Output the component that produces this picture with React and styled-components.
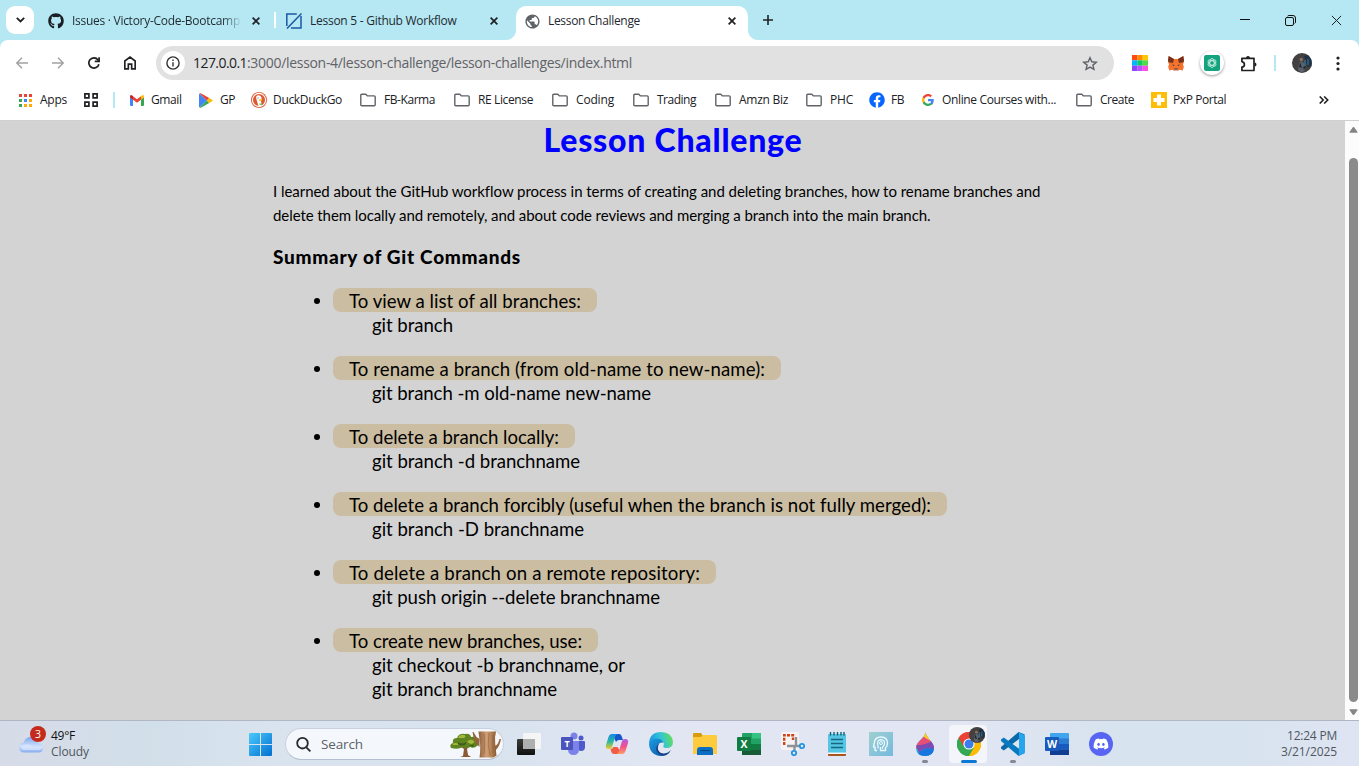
import React, { useLayoutEffect, useRef, useState } from 'react';
import styled, { createGlobalStyle } from 'styled-components';
import { FaGithub, FaDiscord, FaFacebook } from 'react-icons/fa';
import { MdPublic } from 'react-icons/md';

const GlobalStyle = createGlobalStyle`
  * { box-sizing: border-box; }
  body { margin: 0; overflow: hidden; }
  svg { display: block; flex: none; }
`;

const UI_FONT = '"Open Sans", "Noto Sans", sans-serif';
const PAGE_FONT = 'Lato, "Liberation Sans", sans-serif';

/* ---------- text that is tracked to a given width ---------- */
const FitSpan = styled.span`
  display: inline-block;
  white-space: pre;
  flex: none;
`;

function Fit({ w, children }) {
  const ref = useRef(null);
  const [spacing, setSpacing] = useState(0);
  useLayoutEffect(() => {
    const natural = ref.current.getBoundingClientRect().width;
    setSpacing((w - natural) / children.length);
  }, [w, children]);
  return (
    <FitSpan ref={ref} style={{ letterSpacing: `${spacing}px` }}>
      {children}
    </FitSpan>
  );
}

/* ---------- window ---------- */
const Desktop = styled.div`
  width: 1359px;
  height: 766px;
  display: flex;
  flex-direction: column;
  overflow: hidden;
  background: #b5e8f3;
`;

const TabStrip = styled.div`
  height: 40px;
  flex: none;
  display: flex;
  align-items: flex-end;
  padding-left: 6px;
  font: 12px/16px ${UI_FONT};
  color: #1f2a30;
`;

const TabSearch = styled.div`
  width: 28px;
  height: 28px;
  margin: 0 6px 6px 0;
  border-radius: 9px;
  background: #fff;
  display: grid;
  place-items: center;
`;

const Tab = styled.div`
  position: relative;
  width: 232px;
  height: 34px;
  padding: 0 8px 5px 8px;
  display: flex;
  align-items: center;
  gap: 8px;
  margin-left: ${(p) => (p.$active ? 6 : 0)}px;
  border-radius: 10px 10px 0 0;
  background: ${(p) => (p.$active ? '#fff' : 'transparent')};
`;

const TabFoot = styled.i`
  position: absolute;
  bottom: 0;
  ${(p) => p.$side}: -10px;
  width: 10px;
  height: 10px;
  background: radial-gradient(
    circle at ${(p) => (p.$side === 'left' ? '0 0' : '100% 0')},
    transparent 9.5px,
    #fff 10.5px
  );
`;

const TabTitle = styled.div`
  flex: 1;
  min-width: 0;
  mask-image: ${(p) => (p.$fade ? 'linear-gradient(90deg, #000 150px, transparent 170px)' : 'none')};
`;

const TabDivider = styled.div`
  width: 2px;
  height: 16px;
  margin: 0 2px 12px;
  background: #fff;
`;

const NewTab = styled.div`
  width: 40px;
  height: 40px;
  display: grid;
  place-items: center;
`;

const WindowControls = styled.div`
  margin-left: auto;
  height: 40px;
  display: flex;
`;

const WindowButton = styled.div`
  width: 46px;
  padding-left: 1px;
  display: grid;
  place-items: center;
`;

const Toolbar = styled.div`
  height: 40px;
  flex: none;
  padding: 4px 3px 0 4px;
  display: flex;
  align-items: center;
  background: #fff;
  border-radius: 8px 8px 0 0;
`;

const ToolSlot = styled.div`
  width: ${(p) => p.$w || 36}px;
  height: 36px;
  padding-top: 2px;
  display: grid;
  place-items: center;
`;

const Omnibox = styled.div`
  flex: none;
  width: 958px;
  height: 34px;
  margin: 2px 8px 0;
  padding: 0 16px 0 5px;
  border-radius: 17px;
  background: #e1e1e1;
  display: flex;
  align-items: center;
  font: 14px/20px ${UI_FONT};
  color: #5f6368;
`;

const SiteInfo = styled.div`
  width: 24px;
  height: 24px;
  margin-right: 8px;
  border-radius: 50%;
  background: #fff;
  display: grid;
  place-items: center;
`;

const Host = styled.span`
  color: #202124;
`;

const OmniboxEnd = styled.div`
  margin-left: auto;
`;

const Divider = styled.div`
  width: 2px;
  height: 16px;
  background: #b5e8f3;
`;

const RoundButton = styled.div`
  width: 24px;
  height: 24px;
  border-radius: 50%;
  background: #fff;
  box-shadow: 0 1px 3px rgba(0, 0, 0, 0.4);
  display: grid;
  place-items: center;
`;

const Bookmarks = styled.div`
  height: 41px;
  flex: none;
  padding: 0 30px 0 17px;
  display: flex;
  align-items: center;
  background: #fff;
  border-bottom: 1px solid #cfcfcf;
  font: 12px/16px ${UI_FONT};
  color: #202124;
`;

const BookmarkItem = styled.div`
  display: flex;
  align-items: center;
  flex: none;
  gap: ${(p) => p.$gap}px;
  margin-left: ${(p) => p.$lead}px;
`;

const IconBox = styled.div`
  width: 16px;
  height: 16px;
  flex: none;
  display: grid;
  place-items: center;
`;

const More = styled.div`
  margin-left: auto;
`;

/* ---------- page ---------- */
const Viewport = styled.div`
  height: 599px;
  flex: none;
  display: flex;
  background: #d3d3d3;
`;

const Page = styled.main`
  flex: 1;
  padding-left: 273px;
  font-family: ${PAGE_FONT};
  color: #000;
`;

const Title = styled.h1`
  width: 800px;
  margin: 0;
  text-align: center;
  font-size: 32px;
  line-height: 37px;
  font-weight: 900;
  color: #00f;
`;

const Intro = styled.p`
  margin: 21px 0 0;
  font-size: 15px;
  line-height: 24px;
`;

const Line = styled.span`
  display: block;
`;

const Subtitle = styled.h2`
  margin: 18px 0 0;
  font-size: 19px;
  line-height: 24px;
  font-weight: 900;
`;

const CommandList = styled.ul`
  list-style: none;
  margin: 19px 0 0;
  padding: 0 0 0 41px;
  display: flex;
  flex-direction: column;
  gap: 20px;
  font-size: 18.6px;
  line-height: 24px;
`;

const CommandItem = styled.li`
  display: flex;
  gap: 13px;

  &::before {
    content: '';
    width: 6px;
    height: 6px;
    margin-top: 10px;
    border-radius: 50%;
    background: #000;
  }
`;

const Label = styled.div`
  width: max-content;
  height: 24px;
  padding: 1px 16px 0;
  border-radius: 8px;
  background: #cabda2;
`;

const Command = styled.div`
  height: 24px;
  padding: 1px 0 0 39px;
`;

const Scrollbar = styled.div`
  width: 14px;
  padding: 5px 1px 3px 3px;
  display: flex;
  flex-direction: column;
  align-items: center;
  background: #fcfcfc;
`;

const Thumb = styled.div`
  width: 9px;
  height: 544px;
  flex: none;
  margin: 25px 0 7px;
  border-radius: 5px;
  background: #8b8b8b;
`;

/* ---------- taskbar ---------- */
const Taskbar = styled.footer`
  height: 46px;
  flex: none;
  display: flex;
  align-items: center;
  border-top: 1px solid #b0b6c4;
  background: linear-gradient(90deg, #d7dbe8 0, #d1dfe9 150px, #dae4ef 290px, #d7e3ee 480px, #e2e6f3 670px, #e2e6f3 960px, #d7e3ee 1110px, #d7e3ee 1240px, #dfe4f3 1359px);
  font: 12px/16px ${UI_FONT};
  color: #50565e;
`;

const Weather = styled.div`
  position: relative;
  width: 238px;
  flex: none;
  padding-left: 18px;
  display: flex;
  align-items: center;
  gap: 7px;
`;

const Badge = styled.span`
  position: absolute;
  left: 30px;
  top: -2px;
  width: 16px;
  height: 16px;
  border-radius: 50%;
  background: #c42b1c;
  color: #fff;
  font-size: 10.5px;
  text-align: center;
`;

const Strong = styled.div`
  color: #111;
`;

const TaskSlot = styled.div`
  position: relative;
  width: 44px;
  height: 45px;
  flex: none;
  display: grid;
  place-items: center;
  padding: 1px 0 0 1px;
`;

const ActiveTile = styled.i`
  position: absolute;
  left: 3px;
  top: 4px;
  width: 38px;
  height: 38px;
  border-radius: 4px;
  background: #f3f5fb;
`;

const RunMark = styled.i`
  position: absolute;
  left: calc(50% - ${(p) => (p.$wide ? 7 : 2)}px);
  top: 39px;
  width: ${(p) => (p.$wide ? 16 : 6)}px;
  height: 3px;
  border-radius: 2px;
  background: ${(p) => (p.$wide ? '#0a78d4' : '#858890')};
`;

const SearchBox = styled.div`
  width: 219px;
  height: 32px;
  flex: none;
  margin: 1px 2px 0 3px;
  padding: 0 2px 0 10px;
  border: 1px solid #c9d0de;
  border-bottom-color: #b4bfcf;
  border-radius: 16px;
  background: #f4f8fc;
  display: flex;
  align-items: center;
  gap: 10px;
  font-size: 13.5px;
  color: #5c6167;
`;

const SearchArt = styled.div`
  margin-left: auto;
`;

const Clock = styled.div`
  margin-left: auto;
  padding: 0 22px 0 0;
  text-align: right;
`;

/* ---------- icons ---------- */
const Cross = ({ size = 8, width = 1.7 }) => (
  <svg width={size} height={size} viewBox="0 0 10 10" stroke="#202124" strokeWidth={width * (10 / size)} fill="none">
    <path d="M.8.8l8.4 8.4M9.2.8L.8 9.2" />
  </svg>
);

const Folder = () => (
  <svg width="16" height="14" viewBox="0 0 16 14" fill="none" stroke="#5f6368" strokeWidth="1.4" strokeLinejoin="round">
    <path d="M.8 11.8V2.2q0-1 1-1h4l1.7 1.7h6.7q1 0 1 1v7.9q0 1-1 1H1.8q-1 0-1-1z" />
  </svg>
);

const AppsIcon = () => {
  const c = ['#ea4335', '#ea4335', '#ea4335', '#34a853', '#4285f4', '#fbab05', '#34a853', '#fbab05', '#fbab05'];
  return (
    <svg width="13" height="13" viewBox="0 0 13 13">
      {c.map((f, i) => (
        <rect key={i} x={(i % 3) * 5} y={Math.floor(i / 3) * 5} width="3" height="3" fill={f} />
      ))}
    </svg>
  );
};

const GridIcon = () => (
  <svg width="14" height="14" viewBox="0 0 14 14" fill="none" stroke="#202124" strokeWidth="1.7">
    <path d="M.9.9h4v4h-4zM9.1.9h4v4h-4zM.9 9.1h4v4h-4zM9.1 9.1h4v4h-4z" />
  </svg>
);

const Gmail = () => (
  <svg width="14" height="11" viewBox="0 0 14 11">
    <path fill="#4285f4" d="M0 2v8q0 1 1 1h2V4.5z" />
    <path fill="#34a853" d="M11 4.500V11h2q1 0 1-1V2z" />
    <path fill="#ea4335" d="M3 4.800V1.200l4 3 4-3v3.600L7 7.800z" />
    <path fill="#c5221f" d="M0 2.600V1.500Q.3-.6 2.200.5L3 1.200v3.600z" />
    <path fill="#fbbc04" d="M14 2.600V1.500Q13.700-.6 11.800.5l-.8.7v3.600z" />
  </svg>
);

const Play = () => (
  <svg width="14" height="15" viewBox="0 0 14 15">
    <path fill="#4285f4" d="M.6.400L8 7.500.6 14.600Q0 14 0 13.300V1.700Q0 .9.600.4z" />
    <path fill="#ea4335" d="M.6.400Q1.300 0 2.200.4l8 4.700L8 7.500z" />
    <path fill="#34a853" d="M.6 14.600q.7.400 1.600 0l8-4.700L8 7.500z" />
    <path fill="#fbbc04" d="M10.200 5.100l3 1.600q1.200.8 0 1.600l-3 1.600L8 7.500z" />
  </svg>
);

const Duck = () => (
  <svg width="16" height="16" viewBox="0 0 16 16">
    <circle cx="8" cy="8" r="8" fill="#de5833" />
    <circle cx="8" cy="8" r="6.600" fill="none" stroke="#fff" strokeWidth="1.100" />
    <path fill="#fff" d="M5.600 4q2-1.600 4 .1 1.300 1.300.9 3.500L10 9.500l1 3.800q-2 1.200-3.500.9L5.500 7.500Q4.500 5 5.600 4z" />
    <path fill="#fbc02d" d="M8 7.400q2-.6 3.500-.1l-1.700 1 1 .6-2.600.1z" />
    <path fill="#65bc46" d="M8.500 11l1.200.8 1.500-.7v2l-2.700-.4z" />
    <circle cx="7" cy="6" r=".6" fill="#2d4f8e" />
  </svg>
);

const Google = () => (
  <svg width="12" height="12" viewBox="0 0 24 24">
    <path fill="#4285f4" d="M23.500 12.300c0-.9-.1-1.500-.2-2.200H12v4.500h6.500c-.1 1.100-.9 2.700-2.400 3.800l3.800 3c2.300-2.100 3.600-5.300 3.600-9.100z" />
    <path fill="#34a853" d="M12 24c3.200 0 6-1.100 8-2.900l-3.900-3c-1 .7-2.400 1.200-4.100 1.200-3.200 0-5.800-2-6.800-4.900l-4 3.100C3.200 21.300 7.300 24 12 24z" />
    <path fill="#fbbc05" d="M5.200 14.400c-.5-1.600-.5-3.200 0-4.800l-4-3.100c-1.600 3.300-1.600 7.700 0 11z" />
    <path fill="#ea4335" d="M12 4.700c2.300 0 3.800 1 4.700 1.800l3.400-3.300C18 1.200 15.200 0 12 0 7.300 0 3.200 2.700 1.200 6.600l4 3.100c1-3 3.600-5 6.800-5z" />
  </svg>
);

const Plus = () => (
  <svg width="16" height="16" viewBox="0 0 16 16">
    <path fill="#fdbe08" d="M0 0h16v16H0z" />
    <path fill="#fff" d="M6 2.500h4V6h3.500v4H10v3.500H6V10H2.500V6H6z" />
  </svg>
);

const LessonIcon = () => (
  <svg width="16" height="16" viewBox="0 0 16 16" fill="none" stroke="#1b57a6" strokeWidth="1.500">
    <path d="M.8 13V1h10M5 15h10V3M15.500.5L1 15.500" />
  </svg>
);

const Arrow = ({ flip }) => (
  <svg width="12" height="12" viewBox="0 0 12 12" fill="none" stroke="#a0a2a5" strokeWidth="1.500">
    <path d={flip ? 'M0 6h11M6 .7L11.300 6 6 11.300' : 'M12 6H1M6 .7L.7 6 6 11.300'} />
  </svg>
);

const Reload = () => (
  <svg width="12" height="12" viewBox="0 0 12 12" fill="none" stroke="#202124" strokeWidth="1.700">
    <path d="M10.900 7.200A5.100 5.100 0 1 1 9.900 2.700l.8 1" />
    <path d="M11.100.2v4.200H6.800" />
  </svg>
);

const Home = () => (
  <svg width="12" height="14" viewBox="0 0 13 15" fill="none" stroke="#202124" strokeWidth="1.800">
    <path d="M.9 13.900V5.300L6.500 1.100l5.600 4.200v8.600H8.300V8.800H4.700v5.100z" />
  </svg>
);

const Info = () => (
  <svg width="14" height="14" viewBox="0 0 14 14" fill="none" stroke="#303134" strokeWidth="1.400">
    <circle cx="7" cy="7" r="6.100" />
    <path d="M7 6.200v4.200M7 3.500V5" />
  </svg>
);

const Star = () => (
  <svg width="16" height="15" viewBox="0 0 16 15" fill="none" stroke="#5f6368" strokeWidth="1.400">
    <path d="M8 1.700l1.800 4.100 4.500.4-3.400 2.900 1 4.300L8 11.100l-3.900 2.300 1-4.300-3.400-2.900 4.500-.4z" />
  </svg>
);

const ColorGrid = () => {
  const c = ['#ff4b12', '#ff8d00', '#ffc800', '#00b7ff', '#0ccb62', '#50dc45', '#8948ff', '#b950ff', '#ff4fe0'];
  return (
    <svg width="16" height="16" viewBox="0 0 16 16">
      {c.map((f, i) => (
        <rect key={i} x={(i % 3) * 5.33} y={Math.floor(i / 3) * 5.33} width="5.400" height="5.400" fill={f} />
      ))}
    </svg>
  );
};

const Fox = () => (
  <svg width="16" height="15" viewBox="0 0 16 15">
    <path fill="#f5722d" d="M.7 0L6 3h4l5.300-3L16 4.500l-.9 4 .7 2.500-1.200 3.500-3.200-.7-1.600 1.200H6.200l-1.600-1.200-3.200.7L.2 11l.7-2.500L0 4.500z" />
    <path fill="#75311c" d="M.7 0L6 3l-1 4-4.500-.8L0 4.500zM15.300 0L10 3l1 4 4.500-.8.5-1.700z" />
    <path fill="#283a50" d="M4 8.500l2.300.6-.4 1.200zM12 8.500l-2.300.6.400 1.200zM6.500 12.500h3l.2 1.200H6.300z" />
    <path fill="#dcc9bc" d="M6.200 13.700h3.600l-.5 1.300H6.700z" />
  </svg>
);

const Gpt = () => (
  <svg width="16" height="16" viewBox="0 0 16 16">
    <rect width="16" height="16" rx="2" fill="#14a37f" />
    <g fill="none" stroke="#d5f3e9" strokeWidth=".8">
      {[0, 60, 120].map((a) => (
        <ellipse key={a} cx="8" cy="8" rx="2.200" ry="4.500" transform={`rotate(${a} 8 8)`} />
      ))}
    </g>
  </svg>
);

const Puzzle = () => (
  <svg width="17" height="17" viewBox="0 0 17 17" fill="none" stroke="#202124" strokeWidth="1.700" strokeLinejoin="round">
    <path d="M1.900 3.300H14V15.500H1.900V12.200q2.500-.4 2.500-2.800T1.900 6.600z" />
    <path fill="#202124" stroke="none" d="M6 3a2 2 0 0 1 4 0zM14.500 7.500a2 2 0 0 1 0 4z" />
  </svg>
);

const Avatar = ({ size = 20 }) => (
  <svg width={size} height={size} viewBox="0 0 20 20">
    <circle cx="10" cy="10" r="10" fill="#43403f" />
    <path d="M12 3l4-1 3.500 5v6l-4 1z" fill="#1e3346" />
    <path d="M6 17l1-7 2-2 3 2 1 7-3 3z" fill="#59616d" />
    <circle cx="9.300" cy="6.500" r="1.700" fill="#8b7062" />
    <path d="M8 9l2 6-3-1zM11 14l3-1-2 4z" fill="#202731" />
    <path d="M13 7v6M16 6v6" stroke="#397eaa" strokeWidth="1" />
  </svg>
);

const Dots = () => (
  <svg width="4" height="15" viewBox="0 0 4 15" fill="#202124">
    <circle cx="2" cy="2" r="1.600" />
    <circle cx="2" cy="7.500" r="1.600" />
    <circle cx="2" cy="13" r="1.600" />
  </svg>
);

const ScrollArrow = ({ down }) => (
  <svg width="9" height="7" viewBox="0 0 9 7" fill="#858585" stroke="#858585" strokeLinejoin="round">
    <path d={down ? 'M.8.800h7.400L4.500 6z' : 'M.8 6.200h7.400L4.500 1z'} />
  </svg>
);

const Cloud = () => (
  <svg width="26" height="22" viewBox="0 0 26 22">
    <defs>
      <linearGradient id="cloud" x1="0" y1="0" x2="0" y2="1">
        <stop offset="0" stopColor="#7fa6ef" />
        <stop offset=".6" stopColor="#cfe0fb" />
        <stop offset="1" stopColor="#86adf0" />
      </linearGradient>
    </defs>
    <path fill="url(#cloud)" d="M6 19.500a5 5 0 0 1-.3-10Q7.300 4 13 4t7 6q5 .3 5 5t-5 4.500z" />
    <path fill="#d9e7fd" d="M4 13q6-4 12 1l9 0q-1 3-5 3H6q-4-1-2-4z" opacity=".7" />
  </svg>
);

const StartIcon = () => (
  <svg width="23" height="23" viewBox="0 0 23 23">
    <defs>
      <linearGradient id="win" x1="0" y1="0" x2="1" y2="1">
        <stop offset="0" stopColor="#4cc9fb" />
        <stop offset="1" stopColor="#0070d1" />
      </linearGradient>
    </defs>
    <path fill="url(#win)" d="M1 0h10v11H0V1q0-1 1-1zM12 0h10q1 0 1 1v10H12zM0 12h11v11H1q-1 0-1-1zM12 12h11v10q0 1-1 1H12z" />
  </svg>
);

const SearchIcon = () => (
  <svg width="15" height="15" viewBox="0 0 15 15" fill="none" stroke="#25282c" strokeWidth="1.800">
    <circle cx="6.500" cy="6.200" r="5.300" />
    <path d="M10.300 10.300L14.400 14.400" />
  </svg>
);

const Trees = () => (
  <svg width="51" height="27" viewBox="0 0 51 27">
    <defs>
      <linearGradient id="trunk" x1="0" y1="0" x2="1" y2="0">
        <stop offset="0" stopColor="#8d5d38" />
        <stop offset=".45" stopColor="#cfa078" />
        <stop offset=".75" stopColor="#b07d50" />
        <stop offset="1" stopColor="#875832" />
      </linearGradient>
    </defs>
    <path fill="#8a5a35" d="M13 25l1-7-6-4 1-1 6 3 5-3 1 1-4 4 1 6 3 2H10z" />
    <path fill="#5f8420" d="M1 17q-2-4 2-5-1-5 4-5 2-5 8-4 5-1 6 3 6-1 6 4 3 3 0 5-3 3-7 1-3 2-7 0-5 3-12 1z" />
    <path fill="#a4b83a" d="M3 14q-1-2 2-2 4 0 3 2zM8 7q2-4 6-3 3 1 0 3zM17 11q3-4 7-1 1 2-3 3z" />
    <path fill="#3f5c1a" d="M8 11q4 3 8 0v2q-4 3-8 0zM18 14q4 1 6-1l-1 3z" />
    <path fill="#96643c" d="M22.500 1h1l3 5 3 2v8q-5-5-6-10zM45 15q3-1 4.500-7h1.500q-1 7-6 12z" />
    <path fill="url(#trunk)" d="M28.500.5h17.500q-1.500 5-.8 12t1.300 12l-3 2H29.500q1.500-10 0-18z" />
    <path d="M34 3q1 10 0 20M39 2q-2 12 1 22M43 4v18" stroke="#8b5b35" strokeWidth=".8" fill="none" opacity=".7" />
  </svg>
);

const TaskView = () => (
  <svg width="24" height="24" viewBox="0 0 24 24">
    <defs>
      <linearGradient id="tv" x1="0" y1="0" x2="0" y2="1">
        <stop offset="0" stopColor="#3c3c3a" />
        <stop offset="1" stopColor="#111" />
      </linearGradient>
    </defs>
    <rect x="0" y="7" width="18" height="16" rx="1" fill="url(#tv)" />
    <rect x="6" y="1" width="18" height="16" rx="1" fill="#f5f5f5" />
    <rect x="6" y="7" width="12" height="10" fill="#aeb0b0" />
  </svg>
);

const Teams = () => (
  <svg width="24" height="24" viewBox="0 0 24 24">
    <circle cx="20" cy="6" r="2.500" fill="#5059c9" />
    <circle cx="13" cy="4" r="3.500" fill="#7b83eb" />
    <path fill="#5059c9" d="M16 9h7q1 0 1 1v5q0 4-4 4-3 0-4-3z" />
    <path fill="#7b83eb" d="M7 9h11v8q0 6-5.500 6T7 17z" />
    <rect x="0" y="5" width="12" height="13" rx="1" fill="#4b53bc" />
    <text x="6" y="14.700" textAnchor="middle" fontFamily="Open Sans" fontWeight="700" fontSize="9" fill="#fff">T</text>
  </svg>
);

const Copilot = () => (
  <svg width="24" height="24" viewBox="0 0 24 24">
    <defs>
      <linearGradient id="cpA" x1="0" y1="0" x2="0" y2="1">
        <stop offset="0" stopColor="#1389e5" />
        <stop offset=".5" stopColor="#2ab9a0" />
        <stop offset="1" stopColor="#f2ca20" />
      </linearGradient>
      <linearGradient id="cpB" x1="0" y1="0" x2="0" y2="1">
        <stop offset="0" stopColor="#b15be5" />
        <stop offset=".5" stopColor="#f0518b" />
        <stop offset="1" stopColor="#ff9a62" />
      </linearGradient>
    </defs>
    <path fill="#1757ce" d="M7 2h7q2 0 2.600 2L18 8h-4q-2 0-3 2z" />
    <path fill="url(#cpA)" d="M7 2h6q-2 0-2.800 2.500L7 15q-.7 2-3 2-4 0-3-4L3.500 5Q4.500 2 7 2z" />
    <path fill="#f25c41" d="M17 22H9q-2 0-2.600-2L5.500 17q2 0 3-2h4z" />
    <path fill="url(#cpB)" d="M17 22h-6q2 0 2.800-2.500L17 9q.7-2 3-2 4 0 3 4l-2.500 8q-1 3-3.500 3z" />
  </svg>
);

const Edge = () => (
  <svg width="24" height="24" viewBox="0 0 24 24">
    <defs>
      <linearGradient id="edA" x1="0" y1=".5" x2="1" y2=".3">
        <stop offset="0" stopColor="#1c92df" />
        <stop offset=".5" stopColor="#31c4d8" />
        <stop offset="1" stopColor="#65df58" />
      </linearGradient>
      <linearGradient id="edB" x1="0" y1="0" x2="1" y2="1">
        <stop offset="0" stopColor="#1b9de2" />
        <stop offset="1" stopColor="#0b4f9f" />
      </linearGradient>
    </defs>
    <path fill="url(#edA)" d="M0 11Q1 0 12 0t12 10q0 6-6.500 6-4 0-3-2.500.8-1.500 0-3Q12.500 7 8 7.500 3 8 0 12z" />
    <path fill="url(#edB)" d="M0 12Q2 6.500 8 6.800q5 .2 6.500 4-3.500-1-5.200 2-2 4 1.200 7.700 5 4 11-1Q18 24 12 24 1 23.500 0 12z" />
    <path fill="#123f85" d="M10 12q-3 5 1 8.500 5 3 11-2.500Q18 24 13 23.500 6 21 7.500 15q.7-2 2.500-3z" />
  </svg>
);

const Explorer = () => (
  <svg width="24" height="22" viewBox="0 0 24 22">
    <path fill="#d99a0b" d="M0 1q0-1 1-1h7l2 3h13v6H0z" />
    <path fill="#fecb3e" d="M0 5q0-1 1-1h7l2-2h13q1 0 1 1v18H0z" />
    <path fill="#0a6fc4" d="M4 22v-5q0-3 3-3h10q3 0 3 3v5z" />
    <path stroke="#064a8c" strokeWidth="1.200" d="M7 17.500h10" />
  </svg>
);

const Office = ({ letter, c, badge }) => (
  <svg width="24" height="22" viewBox="0 0 24 22">
    <rect x="5" width="19" height="22" rx="1" fill={c[0]} />
    {letter === 'X' && <rect x="15" width="9" height="6" fill={c[1]} />}
    <rect x="5" y="5.500" width="19" height="5.500" fill={c[2]} />
    <rect x="5" y="11" width="19" height="5.500" fill={c[3]} />
    <rect x="5" y="16.500" width="19" height="5.500" fill={c[4]} />
    <rect y="4" width="14" height="14" rx="1" fill={badge} />
    <text x="7" y="14.800" textAnchor="middle" fontFamily="Open Sans" fontWeight="700" fontSize="10.500" fill="#fff">{letter}</text>
  </svg>
);

const Snip = () => (
  <svg width="24" height="24" viewBox="0 0 24 24" fill="none">
    <rect x="0" y="0" width="18" height="18" rx="2" fill="#f5f3f4" />
    <path d="M3.200 13V3.200H12V8" stroke="#d24317" strokeWidth="2.400" strokeDasharray="3 1.200" />
    <path d="M15 5v9H6M14 14h4M13.500 13v5" stroke="#8e9298" strokeWidth="2.400" />
    <circle cx="21" cy="14" r="2.200" stroke="#2196dd" strokeWidth="1.800" />
    <circle cx="13" cy="21" r="2.200" stroke="#2196dd" strokeWidth="1.800" />
  </svg>
);

const Notepad = () => (
  <svg width="18" height="24" viewBox="0 0 18 24">
    <rect y="20" width="18" height="4" rx="1" fill="#a9561e" />
    <rect y="2" width="18" height="19" rx="1" fill="#54c5e2" />
    <path fill="#eef6f9" d="M0 20.500h18v1.500H0z" />
    <path d="M2.500 0v3.500M6 0v3.500M9.500 0v3.500M13 0v3.500M16 0v3.500" stroke="#155d76" strokeWidth="1.400" />
    <path d="M3 7.500h12M3 11.500h12M3 15.500h12" stroke="#176783" strokeWidth="1.600" />
  </svg>
);

const HeadIcon = () => (
  <svg width="24" height="24" viewBox="0 0 24 24" fill="none">
    <defs>
      <linearGradient id="head" x1="0" y1="0" x2="1" y2="1">
        <stop offset="0" stopColor="#9fd0cf" />
        <stop offset="1" stopColor="#75b9df" />
      </linearGradient>
    </defs>
    <path fill="url(#head)" d="M0 0h24v24H0z" />
    <path d="M8 18.500h-2V15H4.500l.7-3.500Q5.500 5 12 5t6.500 6.500q0 2.500-2 4.200v2.800H11.500V15" stroke="#edfaff" strokeWidth="1.400" strokeLinejoin="round" />
    <path d="M9 16.500v-3Q7.300 8 12 7.700 16 8 15.500 12q-.5 2.300-2 3.200v1.500" stroke="#edfaff" strokeWidth="1.200" />
    <circle cx="12" cy="11" r="1.500" stroke="#edfaff" strokeWidth="1" />
  </svg>
);

const Paint = () => (
  <svg width="18" height="24" viewBox="0 0 18 24">
    <defs>
      <clipPath id="drop"><path d="M9.500 0Q10 3 14 8t4 8q-.5 8-9 8T0 16q0-4 4.500-8T9.500 0z" /></clipPath>
    </defs>
    <g clipPath="url(#drop)">
      <path fill="#1aaee8" d="M0 0h18v24H0z" />
      <path fill="#ffc91f" d="M6 0h12v10L6 6z" />
      <path fill="#e94f76" d="M0 4l8 1 10 6v4Q8 10 0 17z" />
      <path fill="#7e4bb5" d="M0 13q8 1 18-5v10Q9 14 3 21z" />
      <path fill="#1976dc" d="M2 22q6-8 16-5v7H4z" />
    </g>
  </svg>
);

const ChromeBadge = styled.i`
  position: absolute;
  left: 23px;
  top: 6px;
`;

const TileIcon = styled.div`
  position: relative;
`;

const Chrome = () => (
  <svg width="24" height="24" viewBox="0 0 24 24">
    <path fill="#ea4335" d="M12 12L1.600 6A12 12 0 0 1 22.400 6z" />
    <path fill="#34a853" d="M12 12l0 12A12 12 0 0 1 1.600 6z" />
    <path fill="#fbbc05" d="M12 12l10.400-6A12 12 0 0 1 12 24z" />
    <path fill="#ea4335" d="M1.600 6l5.200 9L12 6.500h10.700L22.400 6A12 12 0 0 0 1.600 6z" />
    <path fill="#fbbc05" d="M22.700 6.500H12l5 9L12 24A12 12 0 0 0 22.700 6.500z" />
    <path fill="#34a853" d="M1.600 6l5.300 9q3 4 10 .5L12 24A12 12 0 0 1 1.600 6z" />
    <circle cx="12" cy="12" r="5.600" fill="#fff" />
    <circle cx="12" cy="12" r="4.500" fill="#3b7ded" />
  </svg>
);

const VsCode = () => (
  <svg width="24" height="24" viewBox="0 0 24 24">
    <path fill="#0b68a9" d="M17.500 0L24 2.500 2.800 18.500 0 16.500v-1.500z" />
    <path fill="#0878bf" d="M17.500 24l6.500-3L2.800 5.500 0 7.500V9z" />
    <path fill="#26a5ed" d="M17 0l6 2.700q1 .4 1 1.500v15.600q0 1.100-1 1.500L17 24q1-1 1-2V2q0-1-1-2z" />
  </svg>
);

const DiscordDisc = styled.div`
  width: 24px;
  height: 24px;
  border-radius: 50%;
  background: #5865f2;
  color: #fff;
  display: grid;
  place-items: center;
`;

/* ---------- data ---------- */
const bookmarks = [
  { icon: <Gmail />, text: 'Gmail', w: 30.5, lead: 14, gap: 6 },
  { icon: <Play />, text: 'GP', w: 15, lead: 16.5, gap: 6 },
  { icon: <Duck />, text: 'DuckDuckGo', w: 69, lead: 16, gap: 6 },
  { icon: <Folder />, text: 'FB-Karma', w: 51, lead: 18, gap: 8 },
  { icon: <Folder />, text: 'RE License', w: 55, lead: 19, gap: 8 },
  { icon: <Folder />, text: 'Coding', w: 38, lead: 19, gap: 8 },
  { icon: <Folder />, text: 'Trading', w: 39, lead: 19, gap: 8 },
  { icon: <Folder />, text: 'Amzn Biz', w: 49, lead: 19, gap: 8 },
  { icon: <Folder />, text: 'PHC', w: 23, lead: 18, gap: 8 },
  { icon: <FaFacebook size={16} color="#0866ff" />, text: 'FB', w: 13, lead: 16, gap: 6 },
  { icon: <Google />, text: 'Online Courses with...', w: 114, lead: 16, gap: 6 },
  { icon: <Folder />, text: 'Create', w: 34, lead: 20, gap: 8 },
  { icon: <Plus />, text: 'PxP Portal', w: 53, lead: 17, gap: 6 },
];

const commands = [
  { label: ['To view a list of all branches:', 232], lines: [['git branch', 81]] },
  { label: ['To rename a branch (from old-name to new-name):', 416], lines: [['git branch -m old-name new-name', 279]] },
  { label: ['To delete a branch locally:', 210], lines: [['git branch -d branchname', 208]] },
  { label: ['To delete a branch forcibly (useful when the branch is not fully merged):', 582], lines: [['git branch -D branchname', 212]] },
  { label: ['To delete a branch on a remote repository:', 351], lines: [['git push origin --delete branchname', 288]] },
  { label: ['To create new branches, use:', 233], lines: [['git checkout -b branchname, or', 253], ['git branch branchname', 185]] },
];

const BrowserTab = ({ icon, title, w, active, fade }) => (
  <Tab $active={active}>
    {active && <TabFoot $side="left" />}
    {active && <TabFoot $side="right" />}
    <IconBox>{icon}</IconBox>
    <TabTitle $fade={fade}><Fit w={w}>{title}</Fit></TabTitle>
    <IconBox><Cross /></IconBox>
  </Tab>
);

export default function App() {
  return (
    <Desktop>
      <GlobalStyle />
      <TabStrip>
        <TabSearch>
          <svg width="9" height="6" viewBox="0 0 9 6" fill="none" stroke="#202124" strokeWidth="1.800"><path d="M.8.800l3.700 3.700L8.200.8" /></svg>
        </TabSearch>
        <BrowserTab icon={<FaGithub size={16} color="#1b1f24" />} title="Issues · Victory-Code-Bootcamp" w={168} fade />
        <TabDivider />
        <BrowserTab icon={<LessonIcon />} title="Lesson 5 - Github Workflow" w={146.5} />
        <BrowserTab icon={<MdPublic size={17} color="#5f6368" />} title="Lesson Challenge" w={92} active />
        <NewTab>
          <svg width="10" height="10" viewBox="0 0 10 10" stroke="#202124" strokeWidth="1.600"><path d="M5 0v10M0 5h10" /></svg>
        </NewTab>
        <WindowControls>
          <WindowButton><svg width="10" height="10" viewBox="0 0 10 10"><path fill="#111" d="M0 4h10v1H0z" /></svg></WindowButton>
          <WindowButton>
            <svg width="11" height="11" viewBox="0 0 11 11" fill="none" stroke="#111"><rect x=".5" y="2.500" width="8" height="8" rx="1.500" /><path d="M2.500 1.200Q3 .5 4 .5h4q2.500 0 2.500 2.500v4q0 1-.8 1.500" /></svg>
          </WindowButton>
          <WindowButton><Cross size={11} width={1} /></WindowButton>
        </WindowControls>
      </TabStrip>

      <Toolbar>
        <ToolSlot><Arrow /></ToolSlot>
        <ToolSlot><Arrow flip /></ToolSlot>
        <ToolSlot><Reload /></ToolSlot>
        <ToolSlot><Home /></ToolSlot>
        <Omnibox>
          <SiteInfo><Info /></SiteInfo>
          <Host><Fit w={54}>127.0.0.1</Fit></Host>
          <Fit w={385}>:3000/lesson-4/lesson-challenge/lesson-challenges/index.html</Fit>
          <OmniboxEnd><Star /></OmniboxEnd>
        </Omnibox>
        <ToolSlot><ColorGrid /></ToolSlot>
        <ToolSlot><Fox /></ToolSlot>
        <ToolSlot><RoundButton><Gpt /></RoundButton></ToolSlot>
        <ToolSlot><Puzzle /></ToolSlot>
        <ToolSlot $w={18}><Divider /></ToolSlot>
        <ToolSlot><Avatar /></ToolSlot>
        <ToolSlot><Dots /></ToolSlot>
      </Toolbar>

      <Bookmarks>
        <BookmarkItem $gap={7} $lead={0}><IconBox><AppsIcon /></IconBox><Fit w={27}>Apps</Fit></BookmarkItem>
        <BookmarkItem $gap={0} $lead={16}><IconBox><GridIcon /></IconBox></BookmarkItem>
        <BookmarkItem $gap={0} $lead={14}><Divider /></BookmarkItem>
        {bookmarks.map((b) => (
          <BookmarkItem key={b.text} $gap={b.gap} $lead={b.lead}>
            <IconBox>{b.icon}</IconBox>
            <Fit w={b.w}>{b.text}</Fit>
          </BookmarkItem>
        ))}
        <More>
          <svg width="10" height="8" viewBox="0 0 10 8" fill="none" stroke="#202124" strokeWidth="1.600"><path d="M.7.500L4.200 4 .7 7.500M5.200.500L8.700 4 5.200 7.500" /></svg>
        </More>
      </Bookmarks>

      <Viewport>
        <Page>
          <Title><Fit w={259}>Lesson Challenge</Fit></Title>
          <Intro>
            <Line><Fit w={768}>I learned about the GitHub workflow process in terms of creating and deleting branches, how to rename branches and</Fit></Line>
            <Line><Fit w={657.5}>delete them locally and remotely, and about code reviews and merging a branch into the main branch.</Fit></Line>
          </Intro>
          <Subtitle><Fit w={248}>Summary of Git Commands</Fit></Subtitle>
          <CommandList>
            {commands.map((c) => (
              <CommandItem key={c.label[0]}>
                <div>
                  <Label><Fit w={c.label[1]}>{c.label[0]}</Fit></Label>
                  {c.lines.map(([text, w]) => (
                    <Command key={text}><Fit w={w}>{text}</Fit></Command>
                  ))}
                </div>
              </CommandItem>
            ))}
          </CommandList>
        </Page>
        <Scrollbar>
          <ScrollArrow />
          <Thumb />
          <ScrollArrow down />
        </Scrollbar>
      </Viewport>

      <Taskbar>
        <Weather>
          <Cloud />
          <Badge>3</Badge>
          <div>
            <Strong><Fit w={24}>49°F</Fit></Strong>
            <div><Fit w={38}>Cloudy</Fit></div>
          </div>
        </Weather>
        <TaskSlot><StartIcon /></TaskSlot>
        <SearchBox>
          <SearchIcon />
          <Fit w={42}>Search</Fit>
          <SearchArt><Trees /></SearchArt>
        </SearchBox>
        <TaskSlot><TaskView /></TaskSlot>
        <TaskSlot><Teams /></TaskSlot>
        <TaskSlot><Copilot /></TaskSlot>
        <TaskSlot><Edge /></TaskSlot>
        <TaskSlot><Explorer /></TaskSlot>
        <TaskSlot><Office letter="X" badge="#107c41" c={['#21a366', '#33c481', '#21a366', '#107c41', '#185c37']} /></TaskSlot>
        <TaskSlot><Snip /></TaskSlot>
        <TaskSlot><Notepad /></TaskSlot>
        <TaskSlot><HeadIcon /></TaskSlot>
        <TaskSlot><Paint /><RunMark /></TaskSlot>
        <TaskSlot>
          <ActiveTile />
          <TileIcon><Chrome /></TileIcon>
          <ChromeBadge><Avatar size={16} /></ChromeBadge>
          <RunMark $wide />
        </TaskSlot>
        <TaskSlot><VsCode /><RunMark /></TaskSlot>
        <TaskSlot><Office letter="W" badge="#185abd" c={['#41a5ee', '#41a5ee', '#2b7cd3', '#185abd', '#103f91']} /></TaskSlot>
        <TaskSlot><DiscordDisc><FaDiscord size={16} /></DiscordDisc></TaskSlot>
        <Clock>
          <div><Fit w={50}>12:24 PM</Fit></div>
          <div><Fit w={56}>3/21/2025</Fit></div>
        </Clock>
      </Taskbar>
    </Desktop>
  );
}
